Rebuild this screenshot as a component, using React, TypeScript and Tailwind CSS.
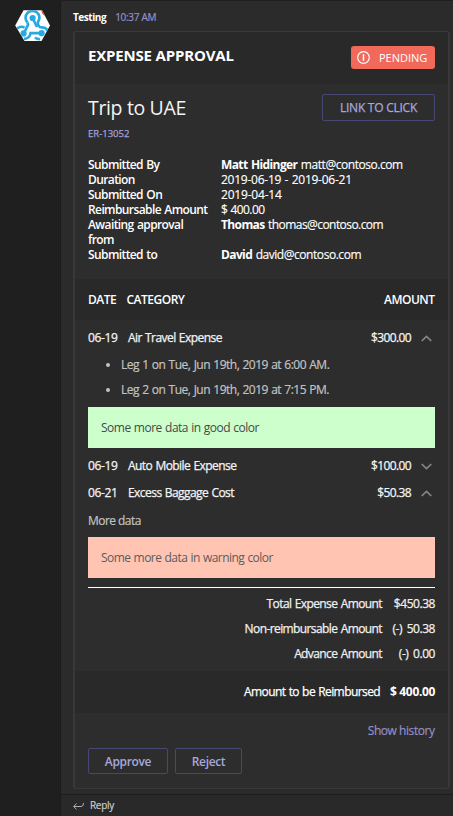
import React from "react";

function Chevron({ down = false }: { down?: boolean }) {
  return (
    <svg className="block h-[7px] w-[11px]" viewBox="0 0 11 7" fill="none" stroke="#868686" strokeWidth="1.7">
      <path d={down ? "M0.7 1L5.5 5.6L10.3 1" : "M0.7 6L5.5 1.4L10.3 6"} />
    </svg>
  );
}

function BotLogo() {
  return (
    <svg className="block h-[32px] w-[36px]" viewBox="0 0 36 32">
      <defs>
        <clipPath id="hex">
          <path d="M8.5 0.2H27L35 15.5L26.5 31H9.5L0.2 15.5Z" />
        </clipPath>
      </defs>
      <g clipPath="url(#hex)">
        <rect width="36" height="32" fill="#ffffff" />
        <path d="M26 0H30V6L27.5 4Z" fill="#e8502f" />
        <g fill="none" stroke="#29a9e1" strokeWidth="2.7">
          <path d="M12.6 12.6A6.9 6.9 0 1 1 23.2 11.6Q22.4 13.2 23.2 14.8L24 16.2Q24.8 17.4 26.6 17.3C30.5 17.2 33 19.5 33.2 24" />
          <path d="M12.6 12.6Q13.6 14.4 12.4 16.2L9 23" />
          <path d="M17.6 8L22 17" />
          <path d="M27 23.2H15.5Q14.8 28.8 9 28.8" />
          <path d="M1 19.8C3 16.8 6.6 16 9.6 17.6" />
          <path d="M20 27.4Q22 29.5 25 29" />
        </g>
        <circle cx="17.6" cy="8" r="3.1" fill="#29a9e1" />
        <circle cx="8.6" cy="23.4" r="3.1" fill="#29a9e1" />
        <circle cx="26.6" cy="23.2" r="3.1" fill="#29a9e1" />
      </g>
    </svg>
  );
}

const facts: { label: string; name?: string; value: string; valueClass: string }[] = [
  { label: "Submitted By", name: "Matt Hidinger", value: "matt@contoso.com", valueClass: "tracking-[-0.45px]" },
  { label: "Duration", value: "2019-06-19 - 2019-06-21", valueClass: "tracking-[-0.25px] [word-spacing:0.6px]" },
  { label: "Submitted On", value: "2019-04-14", valueClass: "tracking-[-0.2px]" },
  { label: "Reimbursable Amount", value: "$ 400.00", valueClass: "tracking-[-0.6px] [word-spacing:0.8px]" },
  { label: "Awaiting approval from", name: "Thomas", value: "thomas@contoso.com", valueClass: "tracking-[-0.56px]" },
  { label: "Submitted to", name: "David", value: "david@contoso.com", valueClass: "tracking-[-0.45px]" },
];

function ExpenseRow({ date, name, amount, open, className }: { date: string; name: string; amount: string; open: boolean; className: string }) {
  return (
    <div className={"flex h-[27px] items-center pb-[2px] tracking-[-0.55px] text-[#f4f4f4] [-webkit-text-stroke:0.25px] " + className}>
      <span className="w-[40px] tracking-[-0.35px]">{date}</span>
      <span className="flex-1 [word-spacing:0.6px]">{name}</span>
      <span className="tracking-[-0.6px]">{amount}</span>
      <span className="mt-[2px] mr-[3px] ml-[10px]"><Chevron down={!open} /></span>
    </div>
  );
}

function TotalRow({ label, value }: { label: string; value: string }) {
  return (
    <div className="flex h-[25px] items-center justify-end pb-[2px] tracking-[-0.6px] text-[#f0f0f0] [-webkit-text-stroke:0.25px]">
      <span className="[word-spacing:0.8px]">{label}</span>
      <span className="w-[53px] text-right tracking-[-0.45px] [word-spacing:2px]">{value}</span>
    </div>
  );
}

export default function App() {
  return (
    <div className="flex h-[816px] w-[453px] overflow-hidden bg-[#1f1f1f] pt-px font-['Open_Sans','Noto_Sans',sans-serif] text-[12px] leading-[15px] whitespace-nowrap text-white">
      <aside className="w-[60px] shrink-0 pt-[9px] pl-[15px]">
        <BotLogo />
      </aside>
      <main className="flex flex-1 flex-col rounded-tl-[2px] border-l border-[#1b1b1b] bg-[#2b2b2b]">
        <div className="flex h-[30px] shrink-0 items-center gap-[9px] pt-[3px] pl-[12px] text-[10px]">
          <span className="font-bold tracking-[-0.45px]">Testing</span>
          <span className="tracking-[-0.3px] text-[#9391c9] [-webkit-text-stroke:0.2px]">10:37 AM</span>
        </div>
        <section className="ml-[12px] flex h-[758px] w-[377px] shrink-0 flex-col rounded-[3px] border-x-2 border-y border-[#383838] bg-[#2d2d2d]">
          <header className="flex h-[52px] shrink-0 items-center justify-between bg-[#292929] px-[13px]">
            <h1 className="pb-[6px] text-[15px] font-bold tracking-[-0.18px]">EXPENSE APPROVAL</h1>
            <div className="mb-px flex h-[23px] w-[84px] items-center rounded-[3px] bg-[#f1695b] pl-[6px] text-[11px]">
              <svg className="mr-[9px] h-[13px] w-[13px]" viewBox="0 0 13 13" fill="none" stroke="white" strokeWidth="1.2">
                <circle cx="6.5" cy="6.5" r="5.8" />
                <path d="M6.5 3.2V9.8" strokeWidth="1.5" />
              </svg>
              PENDING
            </div>
          </header>
          <div className="h-[195px] shrink-0 px-[13px] pt-[10px]">
            <div className="flex items-start justify-between">
              <div>
                <h2 className="h-[28px] text-[19.5px] leading-[28px] tracking-[-0.35px] text-[#f4f4f4]">Trip to UAE</h2>
                <p className="mt-[4px] text-[9.5px] leading-[15px] text-[#a3a1dc] [-webkit-text-stroke:0.25px]">ER-13052</p>
              </div>
              <button className="h-[27px] w-[113px] rounded-[2px] border border-[#464775] text-[12px] tracking-[-0.25px] text-[#a6a7dc] [-webkit-text-stroke:0.25px]">LINK TO CLICK</button>
            </div>
            <dl className="mt-[16px]">
              {facts.map((f) => (
                <div key={f.label} className="flex">
                  <dt className="w-[133px] pr-[12px] font-semibold tracking-[-0.6px] [word-spacing:0.8px] whitespace-normal">{f.label}</dt>
                  <dd className="flex gap-[3.5px]">
                    {f.name && <b className="font-bold tracking-[-0.62px] [word-spacing:1px]">{f.name}</b>}
                    <span className={"[-webkit-text-stroke:0.15px] " + f.valueClass}>{f.value}</span>
                  </dd>
                </div>
              ))}
            </dl>
          </div>
          <div className="flex h-[41px] shrink-0 items-center bg-[#292929] px-[13px] font-semibold tracking-[-0.5px]">
            <span className="w-[38.5px]">DATE</span>
            <span className="flex-1">CATEGORY</span>
            <span className="mr-[0.5px]">AMOUNT</span>
          </div>
          <div className="h-[351px] shrink-0 px-[13px] pt-[5px]">
            <ExpenseRow date="06-19" name="Air Travel Expense" amount="$300.00" open className="" />
            <ul className="text-[#c2c2c2]">
              {["Leg 1 on Tue, Jun 19th, 2019 at 6:00 AM.", "Leg 2 on Tue, Jun 19th, 2019 at 7:15 PM."].map((t) => (
                <li key={t} className="flex h-[25px] items-center pl-[18px] tracking-[-0.5px] [word-spacing:0.6px] [-webkit-text-stroke:0.2px]">
                  <span className="mr-[11px] h-[4px] w-[4px] rounded-full bg-[#c2c2c2]" />
                  {t}
                </li>
              ))}
            </ul>
            <div className="mt-[5px] flex h-[41px] items-center bg-[#ccffcc] pl-[13px] tracking-[-0.5px] text-[#484848] [word-spacing:0.6px]">Some more data in good color</div>
            <ExpenseRow date="06-19" name="Auto Mobile Expense" amount="$100.00" open={false} className="mt-[5px]" />
            <ExpenseRow date="06-21" name="Excess Baggage Cost" amount="$50.38" open className="" />
            <p className="flex h-[27px] items-center pb-px tracking-[-0.55px] text-[#c2c2c2] [-webkit-text-stroke:0.2px]">More data</p>
            <div className="mt-[3px] flex h-[41px] items-center bg-[#ffc4b2] pl-[13px] tracking-[-0.55px] text-[#5c5c5c] [word-spacing:0.6px]">Some more data in warning color</div>
            <div className="mt-[9px] mb-[4px] h-px bg-white" />
            <TotalRow label="Total Expense Amount" value="$450.38" />
            <TotalRow label="Non-reimbursable Amount" value="(-) 50.38" />
            <TotalRow label="Advance Amount" value="(-) 0.00" />
          </div>
          <div className="flex h-[42px] shrink-0 items-center justify-end gap-[10px] bg-[#292929] px-[13px] pb-px">
            <span className="tracking-[-0.58px] [word-spacing:0.6px] [-webkit-text-stroke:0.25px]">Amount to be Reimbursed</span>
            <b className="font-bold tracking-[-0.35px]">$ 400.00</b>
          </div>
          <div className="px-[13px] pt-[10px]">
            <p className="pr-[0.5px] text-right tracking-[-0.45px] text-[#9391c9] [-webkit-text-stroke:0.15px]">Show history</p>
            <div className="mt-[10px] flex gap-[7px] text-[12px] font-semibold tracking-[-0.35px] text-[#a6a7dc]">
              <button className="h-[26px] w-[80px] rounded-[2px] border border-[#464775]">Approve</button>
              <button className="h-[26px] w-[67px] rounded-[2px] border border-[#464775]">Reject</button>
            </div>
          </div>
        </section>
        <footer className="mt-[5px] flex h-[22px] items-center gap-[6px] border-t border-[#1d1d1d] bg-[#292929] pl-[12px] text-[10px] tracking-[-0.3px] text-[#d0d0d0]">
          <svg className="h-[8px] w-[11px]" viewBox="0 0 11 8" fill="none" stroke="#b0b0b0" strokeWidth="1">
            <path d="M3.5 1.5L0.7 4.5L3.5 7.3M0.7 4.5H8.2Q10.5 4.5 10.5 1" />
          </svg>
          <span className="[-webkit-text-stroke:0.15px]">Reply</span>
        </footer>
      </main>
    </div>
  );
}
